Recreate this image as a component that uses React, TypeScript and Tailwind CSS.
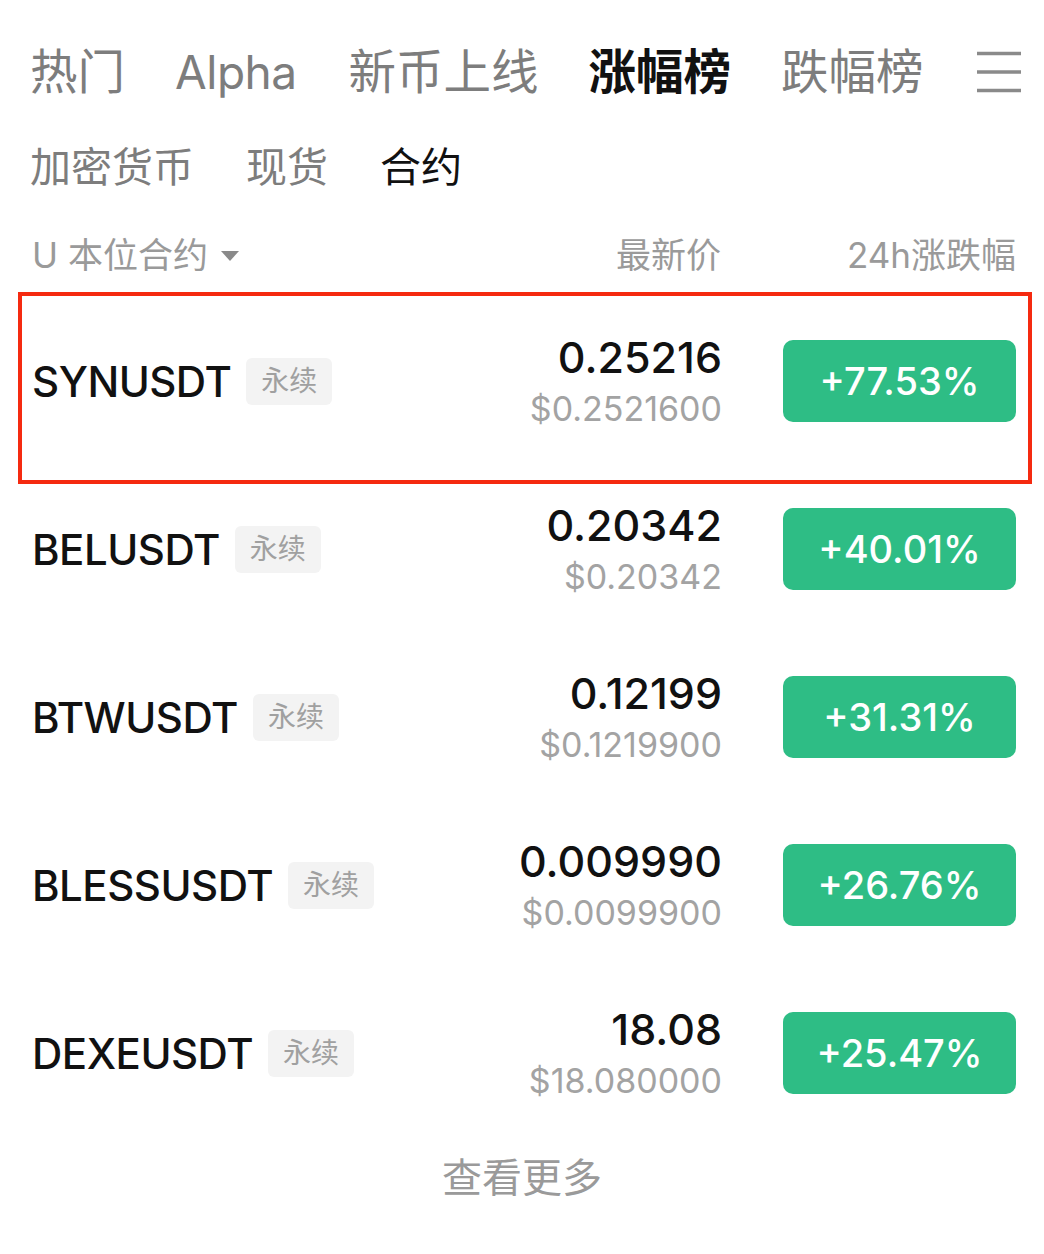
import React from 'react';

interface Ticker {
  symbol: string;
  price: string;
  usd: string;
  change: string;
}

const tickers: Ticker[] = [
  { symbol: 'SYNUSDT', price: '0.25216', usd: '$0.2521600', change: '+77.53%' },
  { symbol: 'BELUSDT', price: '0.20342', usd: '$0.20342', change: '+40.01%' },
  { symbol: 'BTWUSDT', price: '0.12199', usd: '$0.1219900', change: '+31.31%' },
  { symbol: 'BLESSUSDT', price: '0.009990', usd: '$0.0099900', change: '+26.76%' },
  { symbol: 'DEXEUSDT', price: '18.08', usd: '$18.080000', change: '+25.47%' },
];

const font = "font-['Inter','Noto_Sans_CJK_SC',sans-serif]";

const MenuIcon = () => (
  <svg width="46" height="42" viewBox="0 0 46 42" className="text-[#8a8a8a]">
    <path d="M1 2.5h44M1 21h44M1 39.5h44" stroke="currentColor" strokeWidth="3.5" />
  </svg>
);

const Row: React.FC<{ t: Ticker }> = ({ t }) => (
  <div className="h-[168px] flex items-center pl-[32px] pr-[28px]">
    <div className="flex-1 flex items-center gap-[15px]">
      <span className="text-[42px] font-medium text-[#111] tracking-[-0.5px]">{t.symbol}</span>
      <span className="h-[47px] px-[15px] rounded-[6px] bg-[#f3f3f3] text-[28px] text-[#a0a0a0] flex items-center">
        永续
      </span>
    </div>
    <div className="flex flex-col items-end mt-[6px]">
      <span className="text-[43px] leading-[50px] font-medium text-[#111]">{t.price}</span>
      <span className="text-[34px] leading-[54px] text-[#a3a3a3]">{t.usd}</span>
    </div>
    <div className="ml-[61px] w-[233px] h-[82px] rounded-[10px] bg-[#2ebd85] flex items-center justify-center text-white text-[38px] font-medium">
      {t.change}
    </div>
  </div>
);

const App: React.FC = () => {
  return (
    <div className={`${font} bg-white w-[1044px] h-[1254px] overflow-hidden`}>
      <div className="mt-[22px] h-[100px] flex items-center pl-[30px] pr-[22px]">
        <div className="flex-1 flex items-center text-[47.5px] text-[#7d7d7d]">
          <span>热门</span>
          <span className="ml-[50px] text-[46px] tracking-[-0.5px]">Alpha</span>
          <span className="ml-[52px]">新币上线</span>
          <span className="ml-[50px] text-[#111] font-bold">涨幅榜</span>
          <span className="ml-[50px]">跌幅榜</span>
        </div>
        <MenuIcon />
      </div>

      <div className="h-[92px] flex items-center gap-[52px] pl-[30px] text-[41px] text-[#7d7d7d]">
        <span>加密货币</span>
        <span>现货</span>
        <span className="text-[#111]">合约</span>
      </div>

      <div className="h-[83px] flex items-center pl-[32px] pr-[28px] text-[35px] text-[#9a9a9a]">
        <div className="flex-1 flex items-center gap-[12px]">
          <span>U 本位合约</span>
          <svg width="20" height="12" viewBox="0 0 20 12">
            <path d="M1 1h18L10 11z" fill="#8a8a8a" />
          </svg>
        </div>
        <span className="mr-[2px]">最新价</span>
        <span className="ml-[124px]">24h涨跌幅</span>
      </div>

      <div className="relative">
        {tickers.map(t => (
          <Row key={t.symbol} t={t} />
        ))}
        <div className="absolute left-[18px] top-[-5px] w-[1014px] h-[192px] border-[4px] border-[#f52a10] pointer-events-none" />
      </div>

      <div className="h-[82px] flex items-center justify-center text-[40px] text-[#9a9a9a]">
        查看更多
      </div>
    </div>
  );
};

export default App;
